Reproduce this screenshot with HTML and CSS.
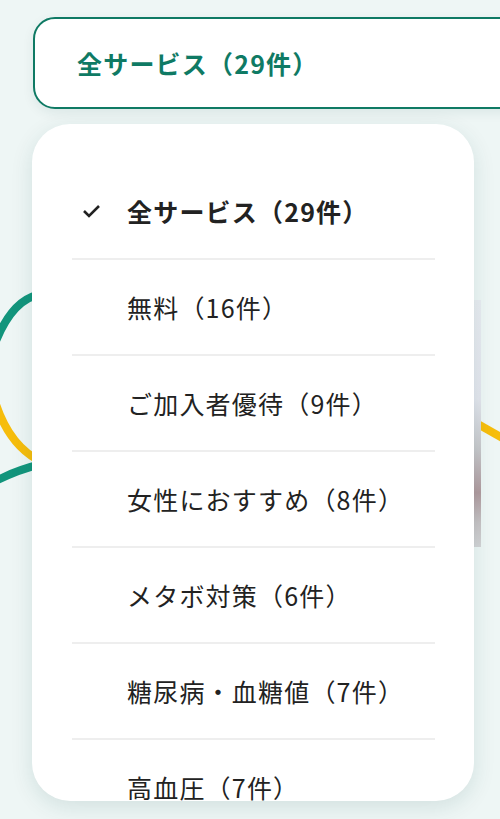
FILE: index.html
```html
<!DOCTYPE html>
<html lang="ja">
<head>
<meta charset="utf-8">
<link rel="stylesheet" href="styles.css">
</head>
<body>
<div class="deco">
  <svg width="500" height="819" viewBox="0 0 500 819">
    <path d="M42 294 Q12 298 -6 346" fill="none" stroke="#12957c" stroke-width="8"/>
    <path d="M-6 398 Q8 446 42 462" fill="none" stroke="#f6bd0c" stroke-width="8"/>
    <path d="M42 464 Q16 470 -6 482" fill="none" stroke="#12957c" stroke-width="8"/>
    <path d="M476 423 L506 440" fill="none" stroke="#f6bd0c" stroke-width="8"/>
  </svg>
  <div class="photo"></div>
</div>
<main class="page">
  <button class="select">全サービス（29件）</button>
  <div class="panel">
    <ul class="list">
      <li class="item selected"><span class="check"><svg width="20" height="14" viewBox="0 0 20 14"><path d="M2 7 L7 12 L17 2" fill="none" stroke="#222" stroke-width="2.6"/></svg></span><span>全サービス（29件）</span></li>
      <li class="item"><span class="check"></span><span>無料（16件）</span></li>
      <li class="item"><span class="check"></span><span>ご加入者優待（9件）</span></li>
      <li class="item"><span class="check"></span><span>女性におすすめ（8件）</span></li>
      <li class="item"><span class="check"></span><span>メタボ対策（6件）</span></li>
      <li class="item"><span class="check"></span><span>糖尿病・血糖値（7件）</span></li>
      <li class="item"><span class="check"></span><span>高血圧（7件）</span></li>
    </ul>
  </div>
</main>
</body>
</html>
```
FILE: styles.css
```css
html, body {
  margin: 0;
  padding: 0;
}
body {
  width: 500px;
  height: 819px;
  overflow: hidden;
  background: #eef6f5;
  font-family: "Noto Sans CJK JP", "Noto Sans", sans-serif;
  color: #222;
  position: relative;
}
.deco {
  position: absolute;
  left: 0;
  top: 0;
  width: 500px;
  height: 819px;
  z-index: 0;
}
.deco svg {
  display: block;
}
.photo {
  position: absolute;
  left: 474px;
  top: 300px;
  width: 7px;
  height: 247px;
  background: linear-gradient(to bottom, #e9ecf1 0%, #e4e6ee 40%, #c9c9cc 60%, #b19a9e 78%, #c7c2c4 90%, #d4d4d6 100%);
}
.page {
  position: relative;
  z-index: 1;
  padding-top: 17px;
  padding-left: 33px;
}
.select {
  display: flex;
  align-items: center;
  box-sizing: border-box;
  width: 520px;
  height: 92px;
  margin: 0;
  padding: 0 0 0 42px;
  background: #fff;
  border: 2.5px solid #0f7a64;
  border-radius: 22px;
  font-family: inherit;
  font-size: 25px;
  font-weight: 700;
  letter-spacing: 1.2px;
  color: #0f7a64;
  box-shadow: 0 4px 12px rgba(0, 60, 60, 0.08);
  text-align: left;
}
.panel {
  box-sizing: border-box;
  width: 442px;
  height: 677px;
  margin-top: 15px;
  margin-left: -1px;
  background: #fff;
  border-radius: 38px;
  overflow: hidden;
  box-shadow: 0 6px 22px rgba(0, 70, 70, 0.12);
}
.list {
  list-style: none;
  margin: 0;
  padding: 40px 39px 0 40px;
}
.item {
  display: flex;
  align-items: center;
  height: 94px;
  border-bottom: 2px solid #eeeeee;
  font-size: 25px;
  letter-spacing: 1.2px;
  color: #222;
}
.item.selected {
  font-weight: 700;
}
.check {
  flex: 0 0 55px;
  display: flex;
  align-items: center;
  padding-left: 10px;
  box-sizing: border-box;
}
.check svg {
  display: block;
}
```
